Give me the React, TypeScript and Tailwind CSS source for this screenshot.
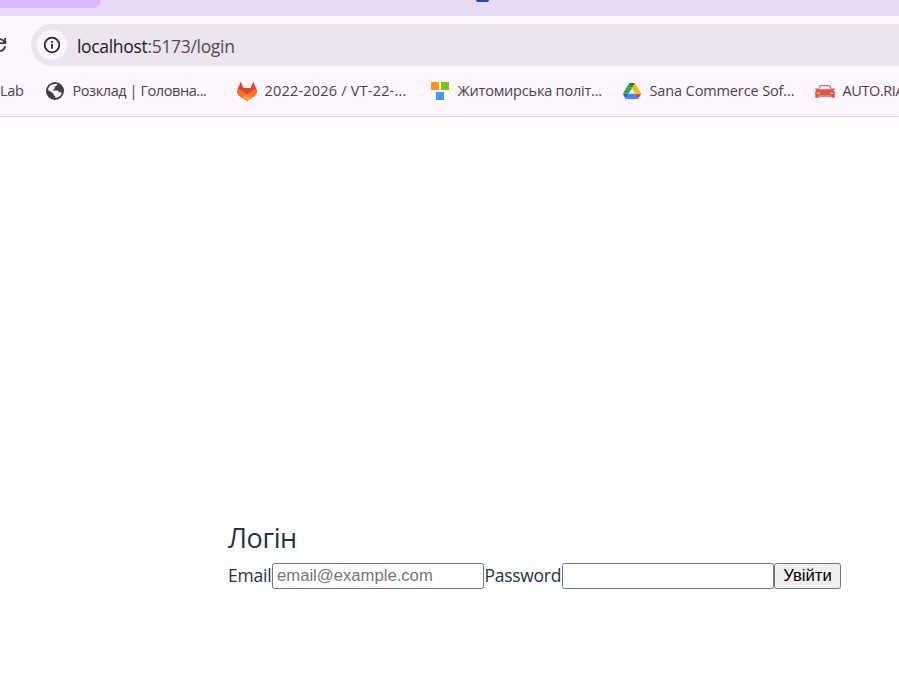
import type { ReactNode } from "react";

function InfoIcon() {
  return (
    <svg width="18" height="18" viewBox="0 0 18 18" fill="none" stroke="#28232c">
      <circle cx="9" cy="9" r="7.3" strokeWidth="1.8" />
      <path d="M9 8.1v4.6M9 5v1.8" strokeWidth="1.8" />
    </svg>
  );
}

function ReloadIcon() {
  return (
    <svg width="7" height="18" viewBox="0 0 7 18" fill="none" stroke="#3f3844" strokeWidth="1.9">
      <path d="M0 3.1C2.2 3.1 3.7 4.4 5 6.6M5.2 2v5.1H0M5.2 10.2C4.5 13 2.6 14.7 0 15.1" />
    </svg>
  );
}

function GlobeIcon() {
  return (
    <svg width="18" height="18" viewBox="0 0 18 18">
      <circle cx="9" cy="9" r="9" fill="#3c4043" />
      <path
        d="M8.6 2.1h2.7c-.3 1.5-1.1 2.2-2.5 2.4v1.7c0 .8-.7 1-1.6 1v1.4h4.2c1 0 1.3.8 1.3 1.7h1.5c.8 0 1.4.3 1.6.8-.7 2.9-3.3 4.8-6.6 4.8v-2c-1 0-1.7-.7-1.7-1.7v-.8L2 8.1C2.3 4.9 5.2 2.2 8.6 2.1Z"
        fill="#fdf6fe"
      />
    </svg>
  );
}

function GitLabIcon() {
  return (
    <svg width="20" height="20" viewBox="0 0 20 20">
      <path d="M3.8.8 6.4 7h7.2L16.2.8 19.4 8c1 2.6.2 5.2-2 7L10 20l-7.4-5C.4 13.2-.4 10.6.6 8Z" fill="#e24329" />
      <path d="M.6 8c2 .3 3.8 1.2 5.3 2.4L10 13.5l4.1-3.1A12 12 0 0 1 19.4 8c1 2.6.2 5.2-2 7L10 20l-7.4-5C.4 13.2-.4 10.6.6 8Z" fill="#fc6d26" />
      <path d="m5.8 16.6 4.2-3.1 4.2 3.1L10 20Z" fill="#fca326" />
    </svg>
  );
}

function SquaresIcon() {
  return (
    <svg width="18" height="18" viewBox="0 0 18 18">
      <path fill="#ff9311" d="M0 0h8v8H0z" />
      <path fill="#76c80e" d="M10 0h8v8h-8z" />
      <path fill="#4498f4" d="M5 10h8v8H5z" />
    </svg>
  );
}

function DriveIcon() {
  return (
    <svg width="18" height="16" viewBox="0 0 87.3 78">
      <path d="m6.6 66.85 3.85 6.65c.8 1.4 1.95 2.5 3.3 3.3L27.5 53H0c0 1.55.4 3.1 1.2 4.5z" fill="#1967d2" />
      <path d="M43.65 25 29.9 1.2c-1.35.8-2.5 1.9-3.3 3.3L1.2 48.5A9.06 9.06 0 0 0 0 53h27.5z" fill="#34a853" />
      <path d="M73.55 76.8c1.35-.8 2.5-1.9 3.3-3.3l1.6-2.75L86.1 57.5c.8-1.4 1.2-2.95 1.2-4.5H59.8l5.85 11.5z" fill="#ea4335" />
      <path d="M43.65 25 57.4 1.2C56.05.4 54.5 0 52.9 0H34.4c-1.6 0-3.15.45-4.5 1.2z" fill="#188038" />
      <path d="M59.8 53H27.5L13.75 76.8c1.35.8 2.9 1.2 4.5 1.2h50.8c1.6 0 3.15-.45 4.5-1.2z" fill="#4285f4" />
      <path d="M73.4 26.5 60.7 4.5c-.8-1.4-1.95-2.5-3.3-3.3L43.65 25 59.8 53h27.45c0-1.55-.4-3.1-1.2-4.5z" fill="#fbbc04" />
    </svg>
  );
}

function CarIcon() {
  return (
    <svg width="20" height="13" viewBox="0 0 20 13">
      <path d="M3.4 4.8 5 1.3Q5.3.7 6 .7h8q.7 0 1 .6l1.6 3.5" fill="none" stroke="#e0685c" strokeWidth="1.2" />
      <path d="M.2 3.4h2.4l.5.8h13.8l.5-.8h2.4v1.1l-1.2.7 1.2 1.6v6h-3.4v-1H3.6v1H.2v-6l1.2-1.6-1.2-.7Z" fill="#dd5547" />
      <path d="M2 7.2l3 .6v1.1H2ZM18 7.2l-3 .6v1.1h3Z" fill="#f4aaa0" />
      <path d="M3.5 10.7h13" stroke="#ee9d93" strokeWidth=".7" />
    </svg>
  );
}

function Bookmark({ icon, children, box, text }: { icon: ReactNode; children: string; box: string; text: string }) {
  return (
    <div className={`flex shrink-0 items-center ${box}`}>
      <span className="flex w-5 shrink-0 justify-center">{icon}</span>
      <span className={`ml-[7.5px] whitespace-nowrap ${text}`}>{children}</span>
    </div>
  );
}

export default function App() {
  return (
    <div className="flex h-[691px] w-[899px] flex-col overflow-hidden bg-[#fefefe] font-['Open_Sans','Noto_Sans',sans-serif]">
      <div className="flex h-4 shrink-0 items-start bg-[#e9dbf5]">
        <div className="h-2 w-[101px] rounded-br-[9px] bg-[#d8b9ff]" />
        <div className="ml-[375px] h-[1.5px] w-[13px] rounded-b-full bg-[#1748cf]" />
      </div>
      <header className="flex h-[101px] shrink-0 flex-col border-b border-[#e3dce6] bg-[#fdf6fe] pt-2">
        <div className="flex h-[42px] shrink-0 items-center">
          <ReloadIcon />
          <div className="ml-6 flex h-full flex-1 items-center rounded-l-full bg-[#ece4ef] pl-1.5">
            <div className="flex size-[30px] items-center justify-center rounded-full bg-[#fdf6fe]">
              <InfoIcon />
            </div>
            <span className="ml-[10px] pt-0.5 text-[17.5px] leading-6 tracking-[-0.32px] text-[#514b57]">
              <span className="text-[#201b25]">localhost</span>:5173/login
            </span>
          </div>
        </div>
        <nav className="flex h-[50px] items-center overflow-hidden text-[14.5px] text-[#48424d]">
          <span className="w-[45px] shrink-0 tracking-[-0.3px]">Lab</span>
          <Bookmark icon={<GlobeIcon />} box="w-[192px]" text="tracking-[-0.42px]">Розклад | Головна...</Bookmark>
          <Bookmark icon={<GitLabIcon />} box="w-[193px]" text="tracking-[0.2px]">2022-2026 / VT-22-...</Bookmark>
          <Bookmark icon={<SquaresIcon />} box="w-[192px]" text="tracking-[-0.2px]">Житомирська політ...</Bookmark>
          <Bookmark icon={<DriveIcon />} box="w-[193px]" text="tracking-[-0.12px]">Sana Commerce Sof...</Bookmark>
          <Bookmark icon={<CarIcon />} box="w-[110px]" text="tracking-[-0.4px]">AUTO.RIA</Bookmark>
        </nav>
      </header>
      <main className="flex flex-1 flex-col pl-[228px] pt-[401px] text-[#213547]">
        <h1 className="h-[45px] text-[27px] leading-[40px] tracking-[-0.4px]">Логін</h1>
        <form className="flex h-[26px] items-center text-[17.5px]" onSubmit={(e) => e.preventDefault()}>
          <label htmlFor="email" className="w-[44px] shrink-0 pb-[3px] leading-6 tracking-[-0.2px]">Email</label>
          <input
            id="email"
            type="email"
            placeholder="email@example.com"
            className="h-[26px] w-[212px] shrink-0 rounded-[2.5px] border border-[#767676] bg-white px-1 font-['Liberation_Sans',sans-serif] text-[16.67px] text-black placeholder:text-[#757575]"
          />
          <label htmlFor="password" className="w-[78px] shrink-0 pl-[0.5px] pb-[3px] leading-6 tracking-[-0.28px]">Password</label>
          <input
            id="password"
            type="password"
            className="h-[26px] w-[212px] shrink-0 rounded-[2.5px] border border-[#767676] bg-white px-1"
          />
          <button className="h-[26px] w-[67px] shrink-0 rounded-[2.5px] border border-[#767676] bg-[#efefef] font-['Liberation_Sans',sans-serif] text-[16.67px] leading-6 text-black">
            Увійти
          </button>
        </form>
      </main>
    </div>
  );
}
